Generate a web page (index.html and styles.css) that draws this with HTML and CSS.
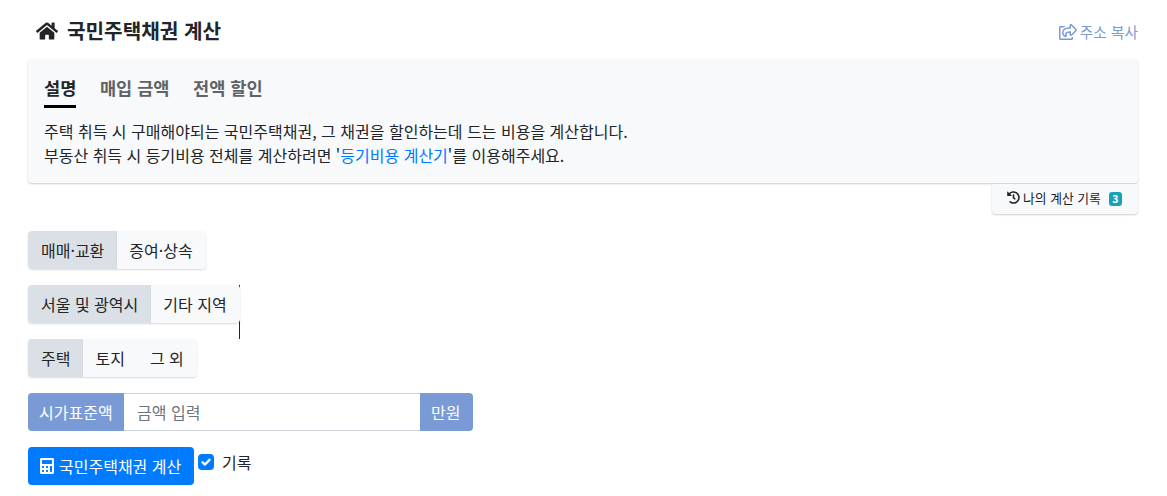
FILE: index.html
```html
<!DOCTYPE html>
<html lang="ko">
<head>
<meta charset="utf-8">
<title>국민주택채권 계산</title>
<link rel="stylesheet" href="styles.css">
</head>
<body>
<div class="page">
  <header class="head">
    <h1 class="title">
      <svg class="home-icon" viewBox="0 0 576 512"><path fill="#212529" d="M280.4 148.3 96 300.1V464a16 16 0 0 0 16 16l112.1-.3a16 16 0 0 0 15.9-16V368a16 16 0 0 1 16-16h64a16 16 0 0 1 16 16v95.6a16 16 0 0 0 16 16.1L464 480a16 16 0 0 0 16-16V300L295.7 148.3a12.2 12.2 0 0 0-15.3 0zM571.6 251.5 488 182.6V44.1a12 12 0 0 0-12-12h-56a12 12 0 0 0-12 12v72.6L318.5 43a48 48 0 0 0-61 0L4.3 251.5a12 12 0 0 0-1.6 16.9l25.5 31A12 12 0 0 0 45.2 301l235.2-193.7a12.2 12.2 0 0 1 15.3 0L530.9 301a12 12 0 0 0 16.9-1.6l25.5-31a12 12 0 0 0-1.7-16.9z"/></svg>
      <span>국민주택채권 계산</span>
    </h1>
    <a class="share" href="#">
      <svg class="share-icon" viewBox="0 0 576 512"><path fill="#7a9ad6" d="M561.938 158.06L417.94 14.092C387.926-15.922 336 5.097 336 48.032v57.198c-42.45 1.88-84.03 6.55-120.76 17.99-35.17 10.95-63.07 27.58-82.91 49.42C108.22 199.2 96 232.6 96 271.94c0 61.697 33.178 112.455 84.87 144.76 37.546 23.508 85.248-12.651 71.02-55.74-15.515-47.119-17.156-70.923 84.11-78.76V336c0 42.993 51.968 63.913 81.94 33.94l143.998-144c18.75-18.74 18.75-49.14 0-67.88zM384 336V232.16C255.309 234.082 166.492 255.35 206.31 376 176.79 357.55 144 324.08 144 271.94c0-109.334 129.14-118.947 240-119.85V48l144 144-144 144zm24.74 84.493a82.658 82.658 0 0 0 20.974-9.303c7.976-4.952 18.286.826 18.286 10.214V464c0 26.51-21.49 48-48 48H48c-26.51 0-48-21.49-48-48V112c0-26.51 21.49-48 48-48h132c6.627 0 12 5.373 12 12v4.486c0 4.917-2.987 9.369-7.569 11.152-13.702 5.331-26.396 11.537-38.05 18.585a12.138 12.138 0 0 1-6.28 1.777H54a6 6 0 0 0-6 6v340a6 6 0 0 0 6 6h340a6 6 0 0 0 6-6v-25.966c0-5.37 3.579-10.059 8.74-11.541z"/></svg>
      <span>주소 복사</span>
    </a>
  </header>

  <section class="card">
    <nav class="tabs">
      <a class="tab tab-active" href="#">설명</a>
      <a class="tab" href="#">매입 금액</a>
      <a class="tab" href="#">전액 할인</a>
    </nav>
    <p class="desc">주택 취득 시 구매해야되는 국민주택채권, 그 채권을 할인하는데 드는 비용을 계산합니다.<br>부동산 취득 시 등기비용 전체를 계산하려면 '<a class="link" href="#">등기비용 계산기</a>'를 이용해주세요.</p>
  </section>

  <div class="history-row">
    <a class="history" href="#">
      <svg class="history-icon" viewBox="0 0 512 512"><path fill="#212529" d="M504 255.500c.3 136.600-111.100 248.400-247.700 248.500-59 0-113.200-20.500-155.800-54.900-11.100-8.900-11.900-25.500-1.800-35.600l11.300-11.300c8.600-8.600 22.400-9.600 31.900-2C173.100 425.100 212.800 440 256 440c101.700 0 184-82.300 184-184 0-101.700-82.300-184-184-184-48.800 0-93.100 19-126.100 49.900l50.800 50.800c10.100 10.100 2.900 27.300-11.300 27.300H24c-8.800 0-16-7.200-16-16V38.600c0-14.300 17.200-21.400 27.300-11.300l49.400 49.400C129.200 34.100 189.600 8 256 8c136.700 0 247.700 110.800 248 247.500zM323.100 334.300l9.800-12.600c8.100-10.500 6.300-25.500-4.200-33.700L288 256.400V152c0-13.300-10.700-24-24-24h-16c-13.300 0-24 10.700-24 24v135.600l65.400 50.900c10.500 8.100 25.500 6.200 33.700-4.200z"/></svg>
      <span class="history-label">나의 계산 기록</span>
      <span class="badge">3</span>
    </a>
  </div>

  <div class="form">
    <div class="group">
      <button class="seg seg-on">매매·교환</button>
      <button class="seg seg-end">증여·상속</button>
    </div>
    <div class="group">
      <button class="seg seg-on">서울 및 광역시</button>
      <button class="seg seg-end">기타 지역</button>
      <i class="stray-line"></i>
    </div>
    <div class="group">
      <button class="seg seg-on">주택</button>
      <button class="seg">토지</button>
      <button class="seg seg-end">그 외</button>
    </div>
    <div class="input-group">
      <span class="addon addon-left">시가표준액</span>
      <input class="amount" type="text" placeholder="금액 입력">
      <span class="addon addon-right">만원</span>
    </div>
    <div class="action">
      <button class="calc">
        <svg class="calc-icon" viewBox="0 0 448 512"><path fill="#fff" d="M400 0H48C22.400 0 0 22.400 0 48v416c0 25.600 22.400 48 48 48h352c25.600 0 48-22.400 48-48V48c0-25.600-22.400-48-48-48zM128 435.200c0 6.400-6.400 12.800-12.800 12.800H76.800c-6.400 0-12.800-6.400-12.800-12.800v-38.400c0-6.400 6.400-12.800 12.800-12.800h38.400c6.400 0 12.800 6.400 12.800 12.800v38.400zm0-128c0 6.400-6.400 12.800-12.800 12.800H76.800c-6.400 0-12.800-6.400-12.800-12.800v-38.400c0-6.400 6.400-12.800 12.800-12.800h38.400c6.400 0 12.800 6.400 12.800 12.800v38.400zm128 128c0 6.400-6.400 12.800-12.800 12.800h-38.400c-6.400 0-12.800-6.400-12.800-12.800v-38.400c0-6.400 6.400-12.800 12.800-12.800h38.400c6.400 0 12.800 6.400 12.800 12.800v38.400zm0-128c0 6.400-6.400 12.800-12.800 12.800h-38.400c-6.400 0-12.800-6.400-12.800-12.800v-38.400c0-6.400 6.400-12.800 12.800-12.800h38.400c6.400 0 12.800 6.400 12.800 12.800v38.400zm128 128c0 6.400-6.400 12.800-12.800 12.800h-38.400c-6.400 0-12.800-6.400-12.800-12.800V268.800c0-6.400 6.400-12.800 12.800-12.800h38.400c6.400 0 12.800 6.400 12.800 12.800v166.400zm0-256c0 6.400-6.400 12.800-12.800 12.800H76.800c-6.400 0-12.800-6.400-12.800-12.800V76.800C64 70.400 70.400 64 76.800 64h294.400c6.400 0 12.800 6.400 12.800 12.800v102.400z"/></svg>
        <span>국민주택채권 계산</span>
      </button>
      <label class="check">
        <span class="box"><svg class="tick" viewBox="0 0 16 16"><path fill="none" stroke="#fff" stroke-width="2.400" stroke-linecap="round" stroke-linejoin="round" d="M4.500 8.300 7 10.500 11.500 5.800"/></svg></span>
        <span class="check-label">기록</span>
      </label>
    </div>
  </div>
</div>
</body>
</html>
```

FILE: styles.css
```css
* { box-sizing: border-box; }
html { margin: 0; padding: 0; background: #fff; }
body {
  margin: 0;
  font-family: "Noto Sans CJK KR", "Noto Sans", "Liberation Sans", sans-serif;
  font-size: 16px;
  color: #212529;
  height: 496px;
  overflow: hidden;
}
a { text-decoration: none; }
.page { padding: 0 29px 0 28px; }

.head {
  display: flex;
  justify-content: space-between;
  align-items: center;
  height: 59px;
  padding-top: 4px;
}
.title {
  display: flex;
  align-items: center;
  gap: 9px;
  margin: 0 0 1px 8px;
  font-size: 20.160px;
  font-weight: 700;
  line-height: 1;
}
.home-icon { width: 22px; height: 20px; }
.share {
  display: flex;
  align-items: center;
  gap: 3px;
  color: #7a9ad6;
  font-size: 14.700px;
}
.share-icon { width: 18px; height: 16px; }

.card {
  height: 124px;
  background: #f8f9fa;
  border-radius: 4px;
  box-shadow: 0 1px 2px rgba(0,0,0,.2);
  padding: 14px 16px 0;
}
.tabs { display: flex; gap: 23.500px; }
.tab {
  display: block;
  height: 35px;
  font-size: 17.600px;
  font-weight: 700;
  line-height: 30px;
  color: #5f6368;
}
.tab-active { color: #212529; border-bottom: 3px solid #000; }
.desc {
  margin: 11px 0 0;
  font-size: 16px;
  line-height: 24px;
  color: #212529;
}
.link { color: #007bff; }

.history-row { display: flex; justify-content: flex-end; height: 48px; padding-top: 1px; }
.history {
  display: flex;
  align-items: center;
  height: 30px;
  width: 146px;
  padding-left: 15px;
  background: #f8f9fa;
  border-radius: 0 0 4px 4px;
  box-shadow: 0 1px 2px rgba(0,0,0,.2);
  color: #212529;
  font-size: 12.800px;
}
.history-icon { width: 13px; height: 13px; margin-bottom: 4px; }
.history-label { margin-left: 3px; margin-bottom: 4px; }
.badge {
  margin-left: 8px;
  width: 13px;
  height: 14px;
  border-radius: 3px;
  background: #17a2b8;
  color: #fff;
  font-size: 10.500px;
  font-weight: 700;
  line-height: 14px;
  text-align: center;
}

.form { display: flex; flex-direction: column; align-items: flex-start; }
.group {
  position: relative;
  display: inline-flex;
  height: 38px;
  margin-bottom: 16px;
  border-radius: 4px;
  box-shadow: 0 1px 2px rgba(0,0,0,.15);
}
.seg {
  height: 38px;
  border: 0;
  padding: 0 13px 0 12px;
  background: #f8f9fa;
  font: inherit;
  font-size: 16px;
  color: #212529;
}
.seg-on {
  padding: 0 12px 0 13px;
  background: #dae0e5;
  border-right: 1px solid #d3d9df;
  border-radius: 4px 0 0 4px;
}
.seg-end { border-radius: 0 4px 4px 0; }
.stray-line {
  position: absolute;
  right: 0;
  top: 0;
  bottom: -16px;
  width: 1px;
  background: #222;
  z-index: -1;
}
.input-group { display: flex; width: 445px; height: 38px; }
.addon {
  display: flex;
  align-items: center;
  padding: 0 11px;
  background: #7a9ad6;
  color: #fff;
  font-size: 16px;
  font-weight: 400;
}
.addon-left { border-radius: 4px 0 0 4px; width: 96px; }
.addon-right { border-radius: 0 4px 4px 0; width: 53px; }
.amount {
  flex: 1;
  min-width: 0;
  height: 38px;
  border: 1px solid #ced4da;
  border-left: 0;
  border-right: 0;
  padding: 0 13px;
  font: inherit;
  font-size: 16px;
  outline: 0;
}
.amount::placeholder { color: #6c757d; opacity: 1; }
.action { display: flex; align-items: flex-start; gap: 4px; margin-top: 16px; }
.calc {
  display: flex;
  align-items: center;
  gap: 5px;
  height: 38px;
  width: 166px;
  padding: 0 12px;
  border: 0;
  border-radius: 4px;
  background: #007bff;
  color: #fff;
  font: inherit;
  font-size: 16px;
}
.calc-icon { width: 14px; height: 16px; }
.check { display: flex; align-items: center; gap: 8px; height: 30px; }
.box {
  display: flex;
  width: 16px;
  height: 16px;
  border-radius: 4px;
  background: #007bff;
}
.tick { width: 16px; height: 16px; }
.check-label { font-size: 16px; }
```
